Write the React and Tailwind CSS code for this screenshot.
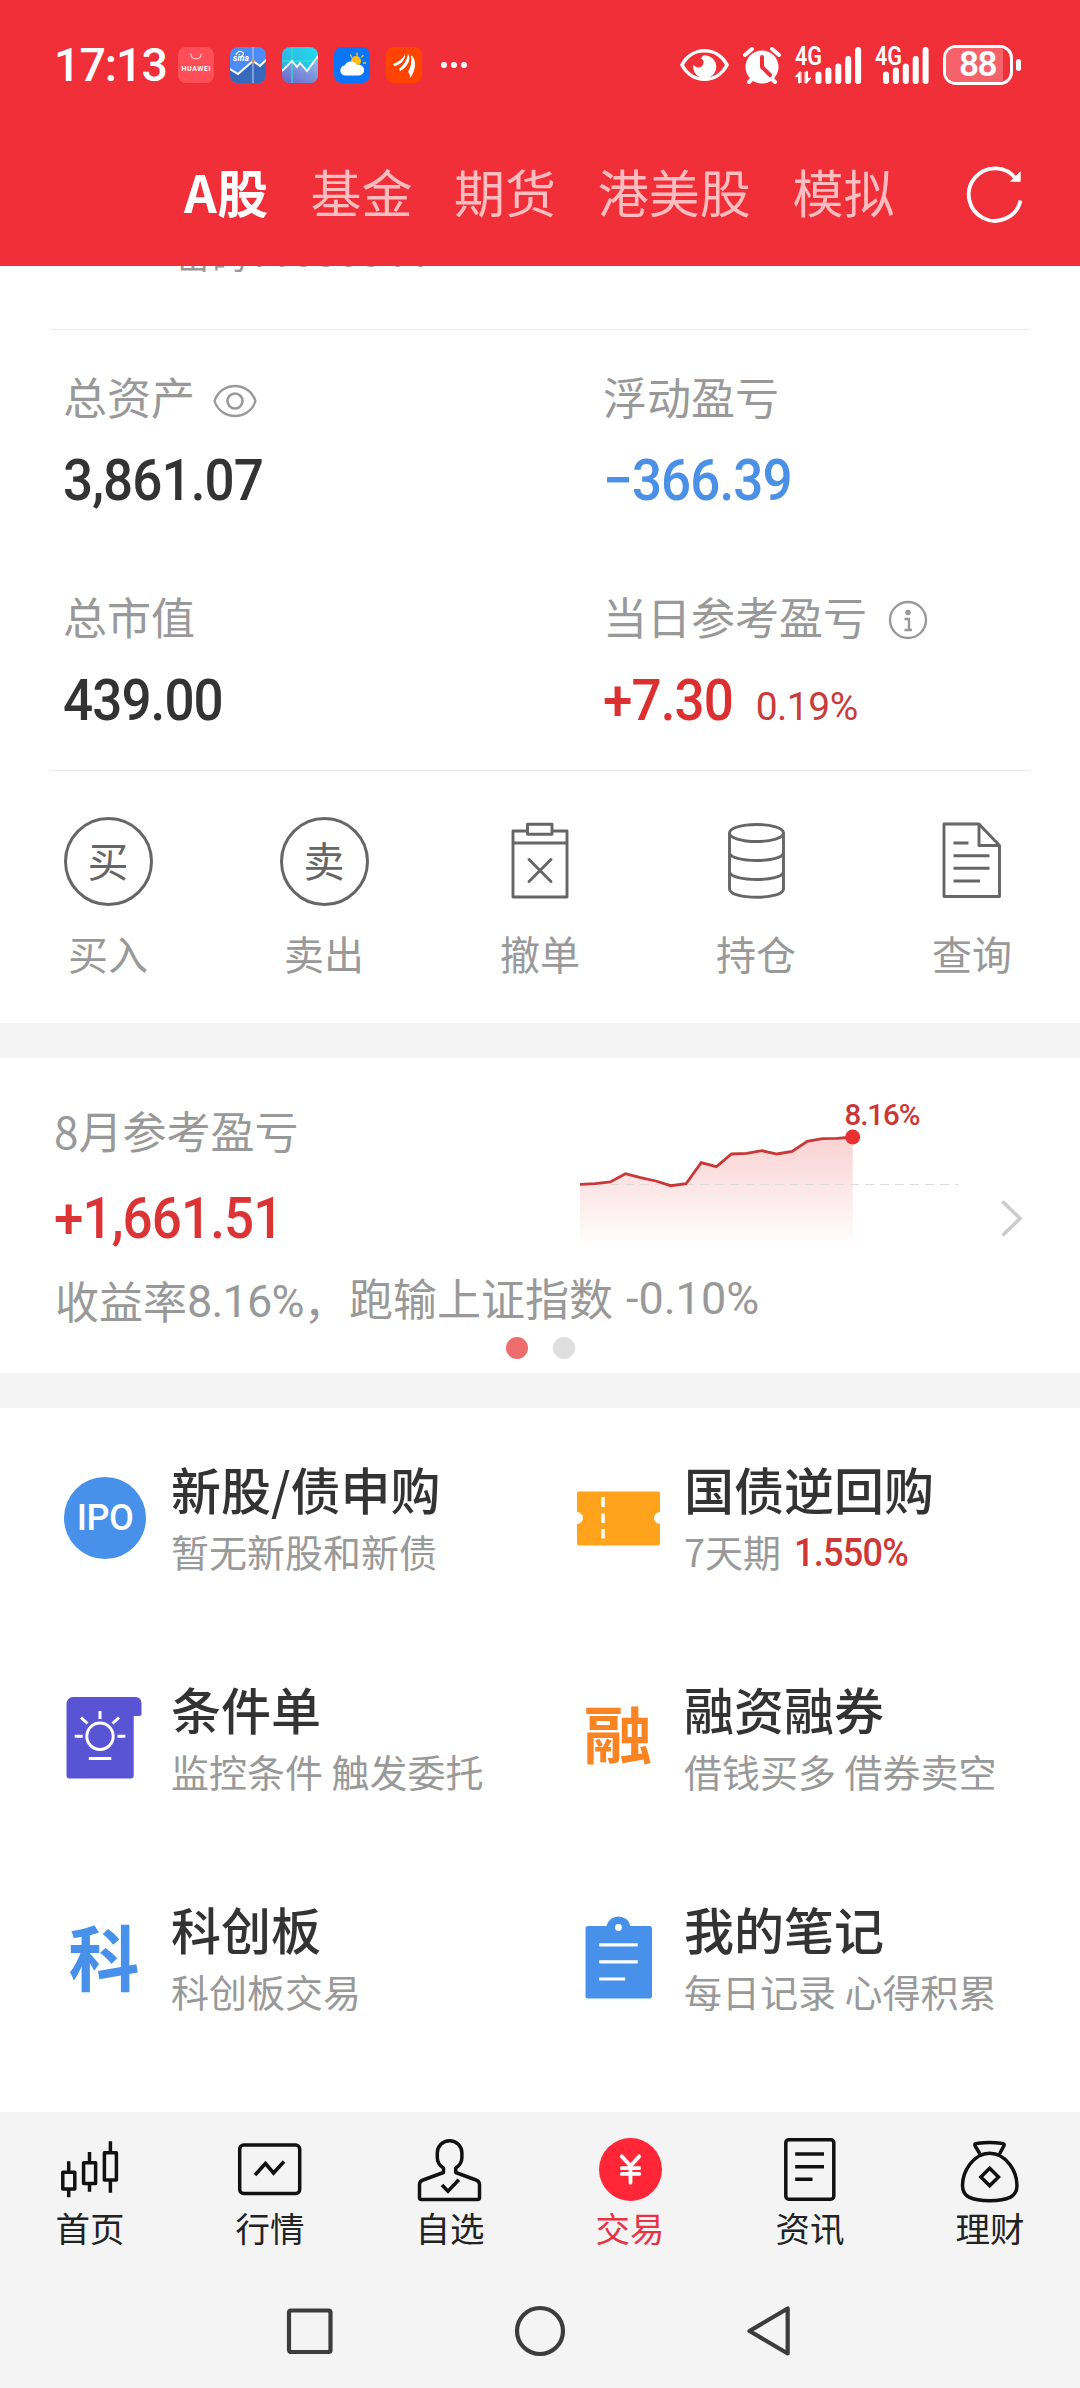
import React from "react";
import { JapaneseYen } from "lucide-react";

const CJK = "font-['Noto_Sans_CJK_SC',sans-serif]";
const NUM = "font-['Roboto',sans-serif]";

function AppIcon({ children }) {
  return (
    <svg width="36" height="36" viewBox="0 0 36 36" className="rounded-[8px]">
      {children}
    </svg>
  );
}

function SignalBars({ tops }) {
  return tops.map((top, i) => (
    <line key={i} x1={3 + i * 9.9} x2={3 + i * 9.9} y1={top + 3} y2="34" stroke="#fff" strokeWidth="6" strokeLinecap="round" />
  ));
}

function StatusBar() {
  return (
    <div className="flex h-[130px] items-center pl-[54px] pr-[59px] text-white">
      <span className="w-[124px] text-[46.5px] font-medium leading-[60px] tracking-[-1px]">17:13</span>
      <div className="flex items-center gap-4">
        <AppIcon>
          <rect width="36" height="36" fill="#ff4e57" />
          <path d="M12.5 6.5a5.5 5.5 0 0 0 11 0" fill="none" stroke="#ffd4d4" strokeWidth="1.2" />
          <text x="18" y="24" fill="#fff" fontSize="7" fontWeight="600" textAnchor="middle" textLength="29">HUAWEI</text>
        </AppIcon>
        <AppIcon>
          <rect width="36" height="36" fill="#4b8df8" />
          <path d="M0 22l8 5 15-13 7 5 6-6v23H0z" fill="#3769bd" />
          <path d="M0 22l8 5 15-13 7 5 6-6" fill="none" stroke="#fff" strokeWidth="2" />
          <path d="M23 0v36" stroke="#c5d3ea" strokeWidth="1" />
          <circle cx="23" cy="14" r="1.8" fill="#d99a3c" />
          <path d="M6 8q2-5 6-3t-2 5" fill="none" stroke="#fff" strokeWidth="1.2" />
          <text x="3" y="14" fill="#fff" fontSize="8.5" fontWeight="700" fontStyle="italic" textLength="16">sina</text>
        </AppIcon>
        <AppIcon>
          <defs>
            <linearGradient id="sky" x1="1" y1="0" x2="0" y2="1">
              <stop offset="0" stopColor="#20e0ee" />
              <stop offset="1" stopColor="#3c9ce0" />
            </linearGradient>
            <linearGradient id="hill" x1="1" y1="0" x2="0.3" y2="1">
              <stop offset="0" stopColor="#8fc7ea" />
              <stop offset="1" stopColor="#6f6fd0" />
            </linearGradient>
          </defs>
          <rect width="36" height="36" fill="url(#sky)" />
          <path d="M0 24l10-11 5 6 3-3 7 8L36 9v27H0z" fill="url(#hill)" />
          <path d="M10 0v36M0 14h36" stroke="#2ce0c8" strokeWidth="1.3" />
          <path d="M0 24l10-10 5 6 3-4 7 8L36 9" fill="none" stroke="#fff" strokeWidth="1.8" />
        </AppIcon>
        <AppIcon>
          <rect width="36" height="36" fill="#0a74fb" />
          <path d="M23 6v2.5M16.5 8l1.2 2M29 8.5l-1.3 1.7M29.5 16h2" stroke="#ffc928" strokeWidth="1.3" strokeLinecap="round" />
          <circle cx="22" cy="14" r="5" fill="#fbbd16" />
          <path d="M11 28.5a5 5 0 0 1-.5-9.9a7 7 0 0 1 12.5-.6a5.4 5.4 0 1 1 1.5 10.5z" fill="#fff" />
        </AppIcon>
        <AppIcon>
          <rect width="36" height="36" fill="#ff4300" />
          <path d="M7 17C12 15 17 12 19 7C20 12 14 19 8 19zM13 22C18 18 21 13 22 7C26 12 21 21 14 24zM22 25C25 20 26 14 25 8C31 12 30 24 24 31C24 28 24 27 22 25z" fill="#fff" />
        </AppIcon>
      </div>
      <div className="ml-[19px] flex gap-1">
        <i className="size-[6px] rounded-full bg-white" />
        <i className="size-[6px] rounded-full bg-white" />
        <i className="size-[6px] rounded-full bg-white" />
      </div>
      <div className="ml-auto flex items-center">
        <svg width="49" height="34" viewBox="0 0 49 34">
          <path d="M2 17C12 -2 37 -2 47 17C37 36 12 36 2 17z" fill="none" stroke="#fff" strokeWidth="3.6" />
          <path d="M23 7.5a11.5 11.5 0 1 1-9.500 9c2 4 8 4 9.500 0s-.5-5-2-6z" fill="#fff" />
        </svg>
        <svg width="40" height="38" viewBox="0 0 40 38" className="ml-[13px]">
          <circle cx="20" cy="21" r="16.5" fill="#fff" />
          <path d="M3 9l7-6M37 9l-7-6M7 36l5-5M33 36l-5-5" stroke="#fff" strokeWidth="4" strokeLinecap="round" />
          <path d="M20 11v10l8 8" fill="none" stroke="#f12f38" strokeWidth="4" strokeLinecap="round" strokeLinejoin="round" />
        </svg>
        <svg width="67" height="38" viewBox="0 0 67 38" className="ml-[13px] overflow-visible">
          <text x="0" y="19" fill="#fff" fontSize="25" fontWeight="600" textLength="27" lengthAdjust="spacingAndGlyphs">4G</text>
          <path d="M0 31l5-5.5V37H3.5v-7zM16 32l-5 5.5V25.5h1.5v7zM6 26v11M10 26v11" fill="#fff" stroke="#fff" strokeWidth="1" />
          <g transform="translate(20.5 1)">
            <SignalBars tops={[24.5, 20.5, 16.5, 9, 0]} />
          </g>
        </svg>
        <svg width="55" height="38" viewBox="0 0 55 38" className="ml-[13px] overflow-visible">
          <text x="0" y="19" fill="#fff" fontSize="25" fontWeight="600" textLength="27" lengthAdjust="spacingAndGlyphs">4G</text>
          <g transform="translate(8 1)">
            <SignalBars tops={[24.5, 20.5, 16.5, 9, 0]} />
          </g>
        </svg>
        <div className="ml-[13px] flex h-10 w-[70px] items-center rounded-[13px] border-[3px] border-white">
          <div className="flex h-[34px] w-[57px] items-center justify-center rounded-l-[9px] bg-[#f5626a] pl-[6px]">
            <span className="text-[35px] font-semibold leading-[34px] tracking-[-1.5px]">88</span>
          </div>
        </div>
        <i className="ml-[3px] h-3 w-[5px] rounded-[3px] bg-white" />
      </div>
    </div>
  );
}

function TopTabs() {
  return (
    <div className={`flex h-[136px] items-start gap-[41.7px] pl-[184px] pr-[54px] pt-[26px] text-[51px] leading-[70px] text-[#ffbdc0] ${CJK}`}>
      <span className="font-bold tracking-[0.5px] text-white">A股</span>
      <span>基金</span>
      <span>期货</span>
      <span>港美股</span>
      <span>模拟</span>
      <svg width="60" height="60" viewBox="0 0 60 60" className="ml-auto mt-[8px]">
        <path d="M54.500 36.500A26.200 26.200 0 1 1 50 15" fill="none" stroke="#fff" strokeWidth="3.8" />
        <path d="M54.700 7v10.700H43.700z" fill="#fff" />
      </svg>
    </div>
  );
}

function Metric({ label, icon, value, color, extra }) {
  return (
    <div className="h-[220px] pl-[63px] pt-9">
      <div className={`flex h-[60px] items-center text-[44px] leading-[60px] text-[#999] ${CJK}`}>
        <span>{label}</span>
        {icon}
      </div>
      <div className={`mt-[25px] flex h-[60px] items-baseline text-[57px] font-medium leading-[60px] ${NUM} ${color}`}>
        <span className="origin-left scale-x-[0.93] tracking-[-1px]">{value}</span>
        {extra}
      </div>
    </div>
  );
}

function Account() {
  return (
    <div className="grid grid-cols-2">
      <Metric
        label="总资产"
        value="3,861.07"
        color="text-[#333]"
        icon={
          <svg width="44" height="34" viewBox="0 0 44 34" className="ml-[18px] mt-[9px]" fill="none" stroke="#999">
            <path d="M1.5 17C8 -3 36 -3 42.5 17C36 37 8 37 1.5 17z" strokeWidth="2.3" />
            <circle cx="22" cy="17" r="7.5" strokeWidth="2.6" />
          </svg>
        }
      />
      <Metric label="浮动盈亏" value="−366.39" color="text-[#4a90e6]" />
      <Metric label="总市值" value="439.00" color="text-[#333]" />
      <Metric
        label="当日参考盈亏"
        value="+7.30"
        color="text-[#dc2f30]"
        extra={<span className="ml-[13px] text-[39px] font-normal tracking-[-0.5px] text-[#c83c3c]">0.19%</span>}
        icon={
          <svg width="40" height="40" viewBox="0 0 40 40" className="ml-[21px] mt-[8px]" fill="none" stroke="#999">
            <circle cx="20" cy="20" r="18" strokeWidth="2.4" />
            <circle cx="20" cy="12.500" r="2.800" fill="#999" stroke="none" />
            <path d="M16.500 19H21v10M16.500 30h7.500" strokeWidth="2.4" />
          </svg>
        }
      />
    </div>
  );
}

function RoundGlyph({ children }) {
  return (
    <div className={`flex size-[89px] items-center justify-center rounded-full border-[3px] border-[#666] pb-1 text-[41px] leading-none text-[#666] ${CJK}`}>
      {children}
    </div>
  );
}

function LineIcon({ children }) {
  return (
    <svg width="90" height="90" viewBox="0 0 90 90" fill="none" stroke="#666" strokeWidth="2.9" strokeLinejoin="round">
      {children}
    </svg>
  );
}

const ACTIONS = [
  { label: "买入", icon: <RoundGlyph>买</RoundGlyph> },
  { label: "卖出", icon: <RoundGlyph>卖</RoundGlyph> },
  {
    label: "撤单",
    icon: (
      <LineIcon>
        <path d="M32.500 15H18v66h54V15H57M18 27h54M32.500 8.300H57v10H32.500z" />
        <path d="M34 43.500l22 22M56 43.500l-22 22" strokeLinecap="round" />
      </LineIcon>
    ),
  },
  {
    label: "持仓",
    icon: (
      <LineIcon>
        <ellipse cx="45.500" cy="17" rx="27" ry="8.500" />
        <path d="M18.500 17v56c0 11 54 11 54 0V17M18.500 37c2 10 52 10 54 0M18.500 56c2 10 52 10 54 0" />
      </LineIcon>
    ),
  },
  {
    label: "查询",
    icon: (
      <LineIcon>
        <path d="M52 8H17v72.500h55.500V29.500zv21.500h20.500" />
        <path d="M26.500 27h15M26.500 39.700h36M26.500 52.300h36M26.500 65h26.500" />
      </LineIcon>
    ),
  },
];

function Actions() {
  return (
    <div className="flex h-[252px] pt-[45px]">
      {ACTIONS.map((a) => (
        <div key={a.label} className="flex flex-1 flex-col items-center">
          <div className="flex h-[90px] items-center">{a.icon}</div>
          <span className={`mt-[23px] text-[40px] leading-[48px] text-[#999] ${CJK}`}>{a.label}</span>
        </div>
      ))}
    </div>
  );
}

const CURVE = [134.3, 133.7, 132, 123.7, 127.7, 131, 135.7, 133.7, 112.7, 116.7, 104, 103.3, 100.7, 104, 101.3, 91.3, 88.7, 88.3, 87];

function ProfitChart() {
  const pts = CURVE.map((y, i) => `${(i * 15.15).toFixed(1)},${(y - 8).toFixed(1)}`).join(" ");
  return (
    <svg width="400" height="207" viewBox="0 0 400 207">
      <defs>
        <linearGradient id="fade" x1="0" y1="79" x2="0" y2="190" gradientUnits="userSpaceOnUse">
          <stop offset="0" stopColor="#e83030" stopOpacity="0.22" />
          <stop offset="1" stopColor="#e83030" stopOpacity="0" />
        </linearGradient>
      </defs>
      <polygon points={`0,190 ${pts} 272.7,190`} fill="url(#fade)" />
      <line x1="0" x2="378" y1="126.500" y2="126.500" stroke="#dcdcdc" strokeDasharray="9 6" />
      <polyline points={pts} fill="none" stroke="#c93838" strokeWidth="2.8" />
      <circle cx="272.700" cy="79" r="7.500" fill="#e83030" />
      <text x="264.500" y="67" fill="#cc3636" fontSize="29.500" fontWeight="500" textLength="76" className={NUM}>8.16%</text>
    </svg>
  );
}

function ProfitCard() {
  return (
    <div className="h-[315px]">
      <div className="flex h-[207px]">
        <div className="w-[580px] pl-[54px] pt-[42px]">
          <div className={`text-[44px] leading-[60px] text-[#999] ${CJK}`}>8月参考盈亏</div>
          <div className={`mt-[29px] origin-left scale-x-[0.93] text-[57px] font-medium leading-[60px] tracking-[-1px] text-[#dc3335] ${NUM}`}>+1,661.51</div>
        </div>
        <ProfitChart />
        <svg width="24" height="40" viewBox="0 0 24 40" className="ml-5 mt-[140px]">
          <path d="M2.500 3.500l17.500 17-17.500 17" fill="none" stroke="#ccc" strokeWidth="3.6" />
        </svg>
      </div>
      <div className="mt-[5px] flex h-[60px] whitespace-nowrap pl-[55px] text-[44px] leading-[60px] text-[#999]">
        <span className="flex w-[294px]">
          <span className={CJK}>收益率</span>
          <span className={`text-[45px] leading-[63px] tracking-[-0.8px] ${NUM}`}>8.16%</span>
          <span className={CJK}>，</span>
        </span>
        <span className="-mt-[3px] flex">
          <span className={CJK}>跑输上证指数</span>
          <span className={`ml-[13px] text-[45px] leading-[63px] ${NUM}`}>-0.10%</span>
        </span>
      </div>
      <div className="mt-[7px] flex justify-center gap-[25px]">
        <i className="size-[22px] rounded-full bg-[#ef6c6d]" />
        <i className="size-[22px] rounded-full bg-[#dfdfdf]" />
      </div>
    </div>
  );
}

const SERVICES = [
  {
    title: "新股/债申购",
    note: "暂无新股和新债",
    icon: (
      <div className={`flex size-[82px] items-center justify-center rounded-full bg-[#4791eb] text-[36px] font-medium leading-none tracking-[-0.5px] text-white ${NUM}`}>
        IPO
      </div>
    ),
  },
  {
    title: "国债逆回购",
    note: "7天期",
    rate: "1.550%",
    icon: (
      <svg width="83" height="82" viewBox="0 0 83 82">
        <path d="M2 14.500h79a2 2 0 0 1 2 2v18.500a6 6 0 0 0 0 12v19.500a2 2 0 0 1-2 2H2a2 2 0 0 1-2-2V47a6 6 0 0 0 0-12V16.500a2 2 0 0 1 2-2z" fill="#ffa31d" />
        <path d="M26 20v10M26 36.500v9.500M26 52v9.500" stroke="#fff" strokeWidth="3.5" />
      </svg>
    ),
  },
  {
    title: "条件单",
    note: "监控条件 触发委托",
    icon: (
      <svg width="82" height="82" viewBox="0 0 82 82">
        <path d="M9 0h62a6 6 0 0 1 6.500 6v11a2 2 0 0 1-2 2H69.700v59.500a3 3 0 0 1-3 3H5.500a3 3 0 0 1-3-3V6.500A6.500 6.500 0 0 1 9 0z" fill="#5854d3" />
        <g fill="none" stroke="#fff" strokeWidth="3">
          <circle cx="36" cy="39.300" r="13.200" />
          <path d="M36 14v8M10.700 39.300h8M53.400 39.300h8M17 20.500l6.500 6M55 20.500l-6.500 6M24.800 61.500h22.500" />
        </g>
      </svg>
    ),
  },
  {
    title: "融资融券",
    note: "借钱买多 借券卖空",
    icon: <span className={`-mt-3 w-[82px] scale-y-90 text-center text-[69px] font-bold leading-[74px] text-[#fb8422] ${CJK}`}>融</span>,
  },
  {
    title: "科创板",
    note: "科创板交易",
    icon: <span className={`-mt-2 w-[80px] text-center text-[71px] font-bold leading-[76px] text-[#4791eb] ${CJK}`}>科</span>,
  },
  {
    title: "我的笔记",
    note: "每日记录 心得积累",
    icon: (
      <svg width="83" height="84" viewBox="0 0 83 84">
        <path d="M11 10h18.500a12.300 12.300 0 0 1 24 0H72.500a2.500 2.500 0 0 1 2.500 2.500V80a2.500 2.500 0 0 1-2.500 2.500H11A2.500 2.500 0 0 1 8.500 80V12.500A2.500 2.500 0 0 1 11 10z" fill="#4791eb" />
        <circle cx="41.500" cy="11.500" r="3.400" fill="#fff" />
        <path d="M22.200 28.800h38.500M22.200 45.800h38.500M22.200 63h26" stroke="#fff" strokeWidth="3.2" />
      </svg>
    ),
  },
];

function Services() {
  return (
    <div className="grid h-[704px] grid-cols-[513px_503px] content-start pl-16">
      {SERVICES.map((s) => (
        <div key={s.title} className="flex h-[220px] pt-[50px]">
          <div className="mt-[19px] flex h-[82px] w-[107px] shrink-0 items-center">{s.icon}</div>
          <div className={CJK}>
            <div className="text-[50px] font-medium leading-[60px] text-[#333]">{s.title}</div>
            <div className="mt-2 flex text-[38px] leading-[50px] text-[#999]">
              <span className="whitespace-nowrap">{s.note}</span>
              {s.rate && (
                <span className={`ml-[13px] origin-left scale-x-[0.95] text-[38px] font-medium leading-[54px] tracking-[-0.8px] text-[#d03838] ${NUM}`}>
                  {s.rate}
                </span>
              )}
            </div>
          </div>
        </div>
      ))}
    </div>
  );
}

function TabIcon({ children }) {
  return (
    <svg width="64" height="64" viewBox="0 0 64 64" className="overflow-visible" fill="none" stroke="#111" strokeWidth="3.5" strokeLinejoin="round">
      {children}
    </svg>
  );
}

const TABS = [
  {
    label: "首页",
    icon: (
      <TabIcon>
        <path d="M4.800 35.200h12V52h-12zM10.700 24.300v10.500M10.700 52v8.300M25.600 25.800h12v20.800h-12zM31.500 15v10.500M31.500 47v7.700M46.400 15.800h12V43h-12zM52.400 4.300v11M52.400 43v12.700" />
      </TabIcon>
    ),
  },
  {
    label: "行情",
    icon: (
      <TabIcon>
        <rect x="1.700" y="8" width="60" height="48.500" rx="4" />
        <path d="M17 38l10.500-11.500 8 9.500L46 24.500" strokeLinejoin="miter" />
      </TabIcon>
    ),
  },
  {
    label: "自选",
    icon: (
      <TabIcon>
        <path d="M25.500 31v4.500L5 43a5 5 0 0 0-3.500 4.500v13a2 2 0 0 0 2 2h56a2 2 0 0 0 2-2v-13A5 5 0 0 0 58 43l-20.300-7.500V31c4-2.500 6.200-6 6.200-10.500v-4.500a12.300 12.300 0 0 0-24.600 0v4.500c0 4.500 2 8 6.200 10.500z" />
        <path d="M24 48l6 6.200 10.800-11.500" strokeLinejoin="miter" />
      </TabIcon>
    ),
  },
  {
    label: "交易",
    active: true,
    icon: (
      <div className="flex size-[63px] items-center justify-center rounded-full bg-[#ff2637]">
        <JapaneseYen size={35} color="#fff" strokeWidth={2.6} />
      </div>
    ),
  },
  {
    label: "资讯",
    icon: (
      <TabIcon>
        <rect x="7.800" y="2.700" width="48" height="59.500" rx="3" />
        <path d="M17.200 17H46M17.200 29.700H46M17.200 42.300h17.300" />
      </TabIcon>
    ),
  },
  {
    label: "理财",
    icon: (
      <TabIcon>
        <path d="M22 17l-4.500-7.500C16 7 17 6.500 20 6.200q11.500-1.500 23 0c3 .3 4 1 2.500 3.300L41.500 17" />
        <path d="M31.700 16.200C15 16.200 4.500 35 4.500 48.500C4.500 60 14 63.700 31.700 63.700S59 60 59 48.500C59 35 48.500 16.200 31.700 16.200z" />
        <path d="M31.700 31.200l8.800 8.800-8.800 8.800L22.900 40z" strokeLinejoin="miter" />
      </TabIcon>
    ),
  },
];

function BottomBar() {
  return (
    <div className="h-[276px] bg-[#f4f4f4]">
      <div className="flex pt-[25px]">
        {TABS.map((t) => (
          <div key={t.label} className="flex flex-1 flex-col items-center">
            <div className="flex h-16 items-center">{t.icon}</div>
            <span className={`mt-[6px] text-[34.5px] leading-[40px] ${CJK} ${t.active ? "text-[#e83345]" : "text-[#222]"}`}>{t.label}</span>
          </div>
        ))}
      </div>
      <div className="mt-[54px] flex justify-center gap-[170px]">
        <svg width="60" height="60" viewBox="0 0 60 60" fill="none" stroke="#3c3c3c" strokeWidth="4.2">
          <rect x="9" y="9.500" width="41.500" height="41.500" rx="2" />
        </svg>
        <svg width="60" height="60" viewBox="0 0 60 60" fill="none" stroke="#3c3c3c" strokeWidth="4.2">
          <circle cx="30" cy="30" r="23" />
        </svg>
        <svg width="60" height="60" viewBox="0 0 60 60" fill="none" stroke="#3c3c3c" strokeWidth="4.2" strokeLinejoin="round">
          <path d="M9.500 30L47.700 7.500v45z" />
        </svg>
      </div>
    </div>
  );
}

export default function App() {
  return (
    <div className={`h-[2388px] w-[1080px] overflow-hidden bg-white ${NUM}`}>
      <header className="h-[266px] bg-[#f12f38]">
        <StatusBar />
        <TopTabs />
      </header>
      <div className="flex h-[63px] overflow-hidden pl-[175px] text-[#999]">
        <span className={`-mt-[43px] h-[60px] text-[36px] leading-[60px] ${CJK}`}>密码</span>
        <span className="-mt-[42px] h-[60px] text-[40px] leading-[60px]">11000044</span>
      </div>
      <hr className="mx-[50px] border-[#ebebeb]" />
      <Account />
      <hr className="mx-[50px] border-[#ebebeb]" />
      <Actions />
      <div className="h-[35px] bg-[#f4f4f4]" />
      <ProfitCard />
      <div className="h-[35px] bg-[#f4f4f4]" />
      <Services />
      <BottomBar />
    </div>
  );
}
